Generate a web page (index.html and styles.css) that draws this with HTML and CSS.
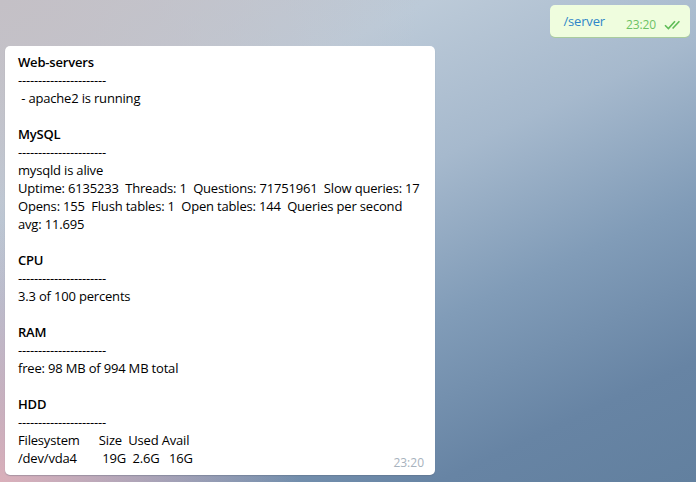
FILE: index.html
```
<!DOCTYPE html>
<html>
<head>
<meta charset="utf-8">
<link rel="stylesheet" href="styles.css">
</head>
<body>
<div class="chat">
  <div class="row out-row">
    <div class="bubble out">
      <span class="cmd">/server</span>
      <span class="meta"><span class="time-out">23:20</span>
        <svg class="checks" width="19" height="10" viewBox="0 0 19 10"><path d="M1 5.2 L4.4 8.5 L11 1.2" fill="none" stroke="#5fbd57" stroke-width="1.6"/><path d="M8.6 8.5 L15.4 1.2" fill="none" stroke="#5fbd57" stroke-width="1.6"/></svg>
      </span>
    </div>
  </div>
  <div class="row in-row">
    <div class="bubble in">
<div class="msg"><b>Web-servers</b>
----------------------
 - apache2 is running

<b>MySQL</b>
----------------------
mysqld is alive
Uptime: 6135233  Threads: 1  Questions: 71751961  Slow queries: 17  Opens: 155  Flush tables: 1  Open tables: 144  Queries per second avg: 11.695

<b>CPU</b>
----------------------
3.3 of 100 percents

<b>RAM</b>
----------------------
free: 98 MB of 994 MB total

<b>HDD</b>
----------------------
Filesystem      Size  Used Avail
/dev/vda4        19G  2.6G   16G</div>
      <span class="time-in">23:20</span>
    </div>
  </div>
</div>
</body>
</html>
```
FILE: styles.css
```
html, body {
  margin: 0;
  padding: 0;
  width: 696px;
  height: 482px;
  overflow: hidden;
}
body {
  font-family: "Open Sans", "Liberation Sans", sans-serif;
  font-size: 13px;
  line-height: 18px;
  color: #000;
  background:
    radial-gradient(ellipse 300px 260px at 0% 100%, rgba(222,176,186,0.95), rgba(222,176,186,0) 100%),
    radial-gradient(ellipse 420px 300px at 0% 0%, rgba(196,192,198,1), rgba(196,192,198,0) 100%),
    linear-gradient(155deg, #c4c6ce 0%, #bccad8 25%, #a6b9cd 45%, #819cb8 65%, #6784a4 85%, #62809f 100%);
}
.chat {
  display: flex;
  flex-direction: column;
  padding: 5px 6px 0 5px;
  gap: 9px;
}
.row {
  display: flex;
}
.out-row {
  justify-content: flex-end;
}
.bubble {
  border-radius: 5px;
}
.out {
  background: #effdde;
  box-shadow: 0 1px 0 #a9cc9e;
  display: flex;
  align-items: flex-end;
  padding: 7px 7px 7px 13px;
}
.cmd {
  color: #2f86c9;
  line-height: 18px;
  letter-spacing: -0.18px;
}
.meta {
  display: flex;
  align-items: center;
  gap: 8px;
  margin-left: 21px;
  margin-bottom: -4px;
  line-height: 18px;
}
.time-out {
  color: #6cc264;
  font-size: 12px;
  letter-spacing: -0.1px;
}
.checks {
  display: block;
}
.in {
  position: relative;
  background: #fff;
  width: 404px;
  padding: 7px 13px 8px 13px;
  box-shadow: 0 1px 1px rgba(90,100,120,0.35);
}
.msg {
  white-space: pre-wrap;
  letter-spacing: -0.18px;
}
.msg b {
  font-weight: 600;
}
.time-in {
  position: absolute;
  right: 11px;
  bottom: 3px;
  font-size: 12px;
  color: #a7b2bd;
}
```
